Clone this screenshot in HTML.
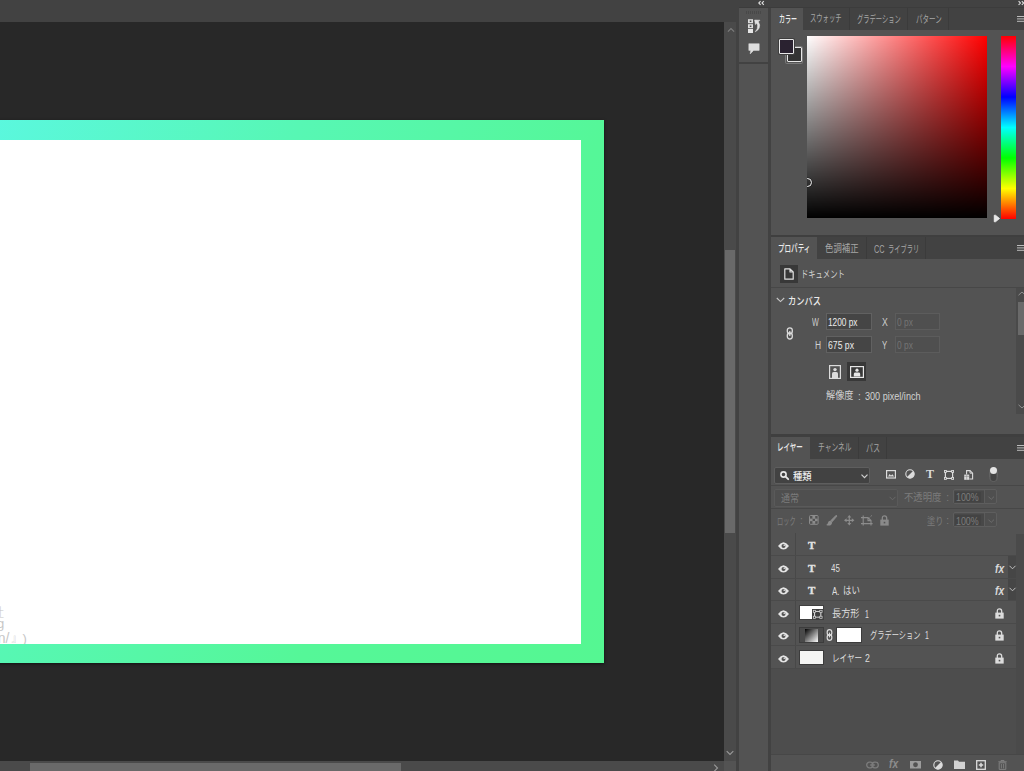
<!DOCTYPE html>
<html lang="ja">
<head>
<meta charset="utf-8">
<title>Photoshop</title>
<style>
*{box-sizing:border-box;margin:0;padding:0}
html,body{width:1024px;height:771px;overflow:hidden;background:#282828}
body{position:relative;font-family:"Liberation Sans","Noto Sans CJK JP",sans-serif;font-size:10px;color:#dcdcdc}
.a{position:absolute}
.t{position:absolute;white-space:nowrap;transform-origin:0 0;line-height:14px;height:14px}
.hi{color:#ececec}
.lo{color:#a6a6a6}
.dis{color:#7c7c7c}
.b{font-weight:500}
.ct{color:#c6c6c6;line-height:15px;height:15px}
svg{position:absolute;overflow:visible}
/*FIT*/
#t-color{left:7.66px;top:4.82px;font-size:10.00px;transform:scaleX(0.599)}
#t-sw{left:39.34px;top:4.10px;font-size:10.00px;transform:scaleX(0.631)}
#t-gr{left:86.00px;top:4.60px;font-size:10.00px;transform:scaleX(0.629)}
#t-pt{left:145.00px;top:4.60px;font-size:10.00px;transform:scaleX(0.651)}
#t-prop{left:7.34px;top:4.60px;font-size:10.00px;transform:scaleX(0.656)}
#t-adj{left:54.00px;top:4.78px;font-size:10.00px;transform:scaleX(0.839)}
#t-cc1{left:103.00px;top:5.48px;font-size:10.00px;transform:scaleX(0.724)}
#t-cc2{left:117.00px;top:5.50px;font-size:10.00px;transform:scaleX(0.624)}
#t-doc{left:30.34px;top:30.95px;font-size:10.00px;transform:scaleX(0.729)}
#t-canvas{left:17.34px;top:57.48px;font-size:10.00px;transform:scaleX(0.823)}
#t-w{left:41.00px;top:78.53px;font-size:10.00px;transform:scaleX(0.715)}
#t-wv{left:57.34px;top:78.12px;font-size:10.00px;transform:scaleX(0.829)}
#t-x{left:110.70px;top:78.53px;font-size:10.00px;transform:scaleX(0.868)}
#t-xv{left:126.00px;top:78.12px;font-size:10.00px;transform:scaleX(0.841)}
#t-h{left:43.70px;top:101.53px;font-size:10.00px;transform:scaleX(0.842)}
#t-hv{left:57.00px;top:101.12px;font-size:10.00px;transform:scaleX(0.866)}
#t-y{left:111.00px;top:101.53px;font-size:10.00px;transform:scaleX(0.774)}
#t-yv{left:126.00px;top:101.12px;font-size:10.00px;transform:scaleX(0.841)}
#t-res1{left:55.00px;top:151.80px;font-size:10.00px;transform:scaleX(0.916)}
#t-res2{left:86.98px;top:153.00px;font-size:10.00px;transform:scaleX(1.000)}
#t-res3{left:94.00px;top:152.64px;font-size:10.00px;transform:scaleX(0.908)}
#t-lay{left:6.34px;top:4.27px;font-size:10.00px;transform:scaleX(0.648)}
#t-ch{left:46.66px;top:4.47px;font-size:10.00px;transform:scaleX(0.674)}
#t-pa{left:95.34px;top:5.48px;font-size:10.00px;transform:scaleX(0.703)}
#t-kind{left:21.66px;top:32.50px;font-size:10.00px;transform:scaleX(0.930)}
#t-norm{left:10.00px;top:55.45px;font-size:10.00px;transform:scaleX(0.900)}
#t-op1{left:133.34px;top:53.50px;font-size:10.00px;transform:scaleX(0.937)}
#t-op2{left:175.26px;top:53.77px;font-size:10.00px;transform:scaleX(1.000)}
#t-opv{left:185.26px;top:54.23px;font-size:10.00px;transform:scaleX(0.887)}
#t-lock1{left:6.00px;top:77.80px;font-size:10.00px;transform:scaleX(0.620)}
#t-lock2{left:29.00px;top:77.45px;font-size:10.00px;transform:scaleX(1.000)}
#t-fill1{left:155.66px;top:77.50px;font-size:10.00px;transform:scaleX(0.817)}
#t-fill2{left:175.26px;top:77.49px;font-size:10.00px;transform:scaleX(1.000)}
#t-fillv{left:185.26px;top:77.77px;font-size:10.00px;transform:scaleX(0.887)}
#t-45{left:60.34px;top:124.82px;font-size:10.00px;transform:scaleX(0.798)}
#t-hai1{left:61.00px;top:147.70px;font-size:10.00px;transform:scaleX(0.799)}
#t-hai2{left:72.00px;top:147.48px;font-size:10.00px;transform:scaleX(0.844)}
#t-rect1{left:61.00px;top:169.73px;font-size:10.00px;transform:scaleX(0.916)}
#t-rect2{left:93.66px;top:170.54px;font-size:10.00px;transform:scaleX(0.690)}
#t-grad1{left:98.66px;top:192.32px;font-size:10.00px;transform:scaleX(0.725)}
#t-grad2{left:153.66px;top:192.46px;font-size:10.00px;transform:scaleX(0.690)}
#t-l21{left:61.00px;top:214.66px;font-size:10.00px;transform:scaleX(0.757)}
#t-l22{left:94.34px;top:214.53px;font-size:10.00px;transform:scaleX(0.875)}
#t-fx1{left:224.46px;top:124.75px;font-size:13.50px;transform:scaleX(0.760)}
#t-fx2{left:224.46px;top:147.45px;font-size:13.50px;transform:scaleX(0.760)}
#t-fx3{left:118.08px;top:320.46px;font-size:13.50px;transform:scaleX(0.763)}
/*ENDFIT*/
</style>
</head>
<body>
<!-- ===== canvas area ===== -->
<div class="a" style="left:0;top:0;width:737px;height:21.5px;background:#424242"></div>
<div class="a" id="doc" style="left:-360px;top:120px;width:964px;height:542.7px;background:linear-gradient(120deg,#5ef8ff 0%,#5df8fd 10%,#57f7b4 52%,#55f798 76%,#55f792 100%);box-shadow:0 1px 3px rgba(0,0,0,.55)"></div>
<div class="a" style="left:-340px;top:140px;width:920.6px;height:504px;background:#fff;overflow:hidden">
  <div class="t ct" style="left:320px;top:466.4px;font-size:12px;font-weight:300">会社</div>
  <div class="t ct" style="left:329.8px;top:475.8px;font-size:13px">ng</div>
  <div class="t ct" style="left:330px;top:491px;font-size:14px">on/</div>
  <div class="t ct" style="left:351.4px;top:491px;font-size:10px;font-weight:300;text-spacing-trim:space-all">』</div>
  <div class="t ct" style="left:362.4px;top:491px;font-size:13px">)</div>
</div>
<!-- vertical scrollbar -->
<div class="a" style="left:724px;top:22px;width:12px;height:739px;background:#4a4a4a"></div>
<div class="a" style="left:725px;top:250px;width:10px;height:283px;background:#696969"></div>
<svg style="left:727px;top:27px" width="8" height="6"><path d="M0.9 4.6 L4 1.5 L7.1 4.6" fill="none" stroke="#7e7e7e" stroke-width="1.1"/></svg>
<svg style="left:726px;top:750px" width="8" height="6"><path d="M0.7 1.2 L4 4.5 L7.3 1.2" fill="none" stroke="#9a9a9a" stroke-width="1.1"/></svg>
<!-- horizontal scrollbar -->
<div class="a" style="left:0;top:761px;width:724px;height:10px;background:#4a4a4a"></div>
<div class="a" style="left:30px;top:763px;width:371px;height:8px;background:#696969"></div>
<div class="a" style="left:724px;top:761px;width:12px;height:10px;background:#535353"></div>
<svg style="left:713px;top:764px" width="6" height="8"><path d="M1.2 0.7 L4.5 4 L1.2 7.3" fill="none" stroke="#9a9a9a" stroke-width="1.1"/></svg>

<!-- ===== right dock ===== -->
<div class="a" style="left:736px;top:0;width:288px;height:771px;background:#424242"></div>
<!-- icon strip -->
<div class="a" style="left:739px;top:8px;width:29.4px;height:54px;background:#535353"></div>
<div class="a" style="left:739px;top:64px;width:29.4px;height:707px;background:#535353"></div>

<!-- dock icons -->
<svg style="left:758px;top:1px" width="7" height="4"><path d="M2.6 0.2 L0.8 2 L2.6 3.8 M5.8 0.2 L4 2 L5.8 3.8" fill="none" stroke="#dedede" stroke-width="1.1"/></svg>
<svg style="left:1018px;top:1px" width="7" height="4"><path d="M0.6 0.2 L2.4 2 L0.6 3.8 M3.8 0.2 L5.6 2 L3.8 3.8" fill="none" stroke="#dedede" stroke-width="1.1"/></svg>
<div class="a" style="left:746px;top:11px;width:16px;height:3px;background:repeating-linear-gradient(to right,#484848 0,#484848 1px,#535353 1px,#535353 2px)"></div>
<svg style="left:748px;top:19px" width="13" height="14"><rect x="0" y="0.2" width="5" height="4" fill="#dedede"/><rect x="1.7" y="1.5" width="1.7" height="1.5" fill="#4a4a4a"/><rect x="0" y="5.2" width="5" height="4" fill="#dedede"/><rect x="1.7" y="6.5" width="1.7" height="1.5" fill="#4a4a4a"/><rect x="0" y="10" width="5" height="4" fill="#e6e6e6"/><path d="M6.6 1 L12 1.2 L10.4 2.8 Q12.6 6 11.2 9 Q10 11.6 7.2 12.8 Q10 9.8 9.6 6.8 Q9.4 5.2 8.6 4.2 L7.4 5.6 Z" fill="#e0e0e0" stroke="#e0e0e0" stroke-width=".5" stroke-linejoin="round"/></svg>
<svg style="left:748px;top:43px" width="12" height="11"><path d="M0.8 0.7 H11.2 V7.4 H5.6 L2.2 10.9 L2.7 7.4 H0.8 Z" fill="#dedede" stroke="#dedede" stroke-width=".5" stroke-linejoin="round"/></svg>
<div class="a" style="left:739px;top:7px;width:285px;height:1px;background:#3c3c3c"></div>
<div class="a" style="left:771px;top:235px;width:253px;height:2.4px;background:#3f3f3f"></div>
<div class="a" style="left:771px;top:434px;width:253px;height:3px;background:#3f3f3f"></div>
<!-- PANELS -->
<div id="p-color" class="a" style="left:771px;top:8px;width:253px;height:227px;background:#535353">
  <!-- tab bar -->
  <div class="a" style="left:32px;top:0;width:221px;height:22px;background:#424242"></div>
  <div class="a" style="left:78px;top:0;width:1px;height:22px;background:#3b3b3b"></div>
  <div class="a" style="left:136px;top:0;width:1px;height:22px;background:#3b3b3b"></div>
  <div class="a" style="left:177px;top:0;width:1px;height:22px;background:#3b3b3b"></div>
  <div class="t hi b" id="t-color">カラー</div>
  <div class="t lo" id="t-sw">スウォッチ</div>
  <div class="t lo" id="t-gr">グラデーション</div>
  <div class="t lo" id="t-pt">パターン</div>
  <!-- menu -->
  <div class="a" style="left:245.8px;top:7.7px;width:7.2px;height:1.2px;background:#bcbcbc;box-shadow:0 2.4px 0 #bcbcbc,0 4.8px 0 #bcbcbc"></div>
  <!-- swatches -->
  <div class="a" style="left:14.3px;top:37.8px;width:17.5px;height:18px;border:1px solid #7a7a7a;border-radius:1.5px;background:#535353"></div>
  <div class="a" style="left:16px;top:39.3px;width:14.7px;height:14.7px;border:1.2px solid #e6e6e6;border-radius:1px;background:#333"></div>
  <div class="a" style="left:7.2px;top:30.2px;width:16.4px;height:16.6px;border:1px solid #3e3e3e;border-radius:1.5px;background:#535353"></div>
  <div class="a" style="left:8px;top:31px;width:14.8px;height:15px;border:1.2px solid #e8e8e8;border-radius:1px;background:#2a2230"></div>
  <!-- colour field -->
  <div class="a" style="left:35.7px;top:28px;width:180.3px;height:182px;background:linear-gradient(to bottom,rgba(0,0,0,0),#000),linear-gradient(to right,#fff,#f00);overflow:hidden">
    <div class="a" style="left:-4.4px;top:141.8px;width:9.4px;height:9.4px;border:1.2px solid #f2f2f2;border-radius:50%;box-shadow:0 0 0 .6px rgba(0,0,0,.45)"></div>
  </div>
  <!-- hue bar -->
  <div class="a" style="left:230px;top:28px;width:15px;height:182.6px;background:linear-gradient(to bottom,#f00 0%,#f0f 16.67%,#00f 33.33%,#0ff 50%,#0f0 66.67%,#ff0 83.33%,#f00 100%)"></div>
  <svg style="left:221.6px;top:205.6px" width="8" height="9"><path d="M1.2 1.2 L2.6 1.2 L6.6 4.5 L2.6 7.8 L1.2 7.8 Z" fill="#e8e8e8" stroke="#fff" stroke-width=".6" stroke-linejoin="round"/></svg>
</div>
<div id="p-prop" class="a" style="left:771px;top:237.4px;width:253px;height:196.6px;background:#535353">
  <div class="a" style="left:46px;top:0;width:207px;height:22px;background:#424242"></div>
  <div class="a" style="left:95px;top:0;width:1px;height:22px;background:#3b3b3b"></div>
  <div class="a" style="left:154px;top:0;width:1px;height:22px;background:#3b3b3b"></div>
  <div class="t hi b" id="t-prop">プロパティ</div>
  <div class="t lo" id="t-adj">色調補正</div>
  <div class="t lo" id="t-cc1">CC</div> <div class="t lo" id="t-cc2">ライブラリ</div>
  <div class="a" style="left:245.8px;top:7.7px;width:7.2px;height:1.2px;background:#bcbcbc;box-shadow:0 2.4px 0 #bcbcbc,0 4.8px 0 #bcbcbc"></div>
  <!-- document row -->
  <div class="a" style="left:9px;top:28px;width:18px;height:18px;background:#383838"></div>
  <svg style="left:13px;top:31px" width="10" height="12"><path d="M0.8 0.8 H6 L9.2 4 V11.2 H0.8 Z M6 0.8 V4 H9.2" fill="none" stroke="#e0e0e0" stroke-width="1.2" stroke-linejoin="round"/></svg>
  <div class="t" id="t-doc" style="color:#d2d2d2">ドキュメント</div>
  <div class="a" style="left:0;top:49.4px;width:253px;height:1px;background:#474747"></div>
  <!-- scrollbar -->
  <div class="a" style="left:245px;top:51px;width:8px;height:126px;background:#4a4a4a"></div>
  <div class="a" style="left:247px;top:65px;width:6px;height:33px;background:#6a6a6a"></div>
  <svg style="left:247px;top:54px" width="8" height="5"><path d="M0.5 4.2 L4 1 L7.5 4.2" fill="none" stroke="#909090" stroke-width="1"/></svg>
  <svg style="left:247px;top:167px" width="8" height="5"><path d="M0.5 0.8 L4 4 L7.5 0.8" fill="none" stroke="#909090" stroke-width="1"/></svg>
  <!-- canvas section -->
  <svg style="left:5px;top:60px" width="9" height="6"><path d="M0.8 1 L4.5 4.6 L8.2 1" fill="none" stroke="#c8c8c8" stroke-width="1.1"/></svg>
  <div class="t hi b" id="t-canvas">カンバス</div>
  <!-- chain -->
  <svg style="left:15px;top:90px" width="8" height="13"><rect x="1.3" y="0.8" width="5" height="6" rx="2.5" fill="none" stroke="#dcdcdc" stroke-width="1.3"/><rect x="1.3" y="6" width="5" height="6" rx="2.5" fill="none" stroke="#dcdcdc" stroke-width="1.3"/><path d="M3.8 4 V9" stroke="#dcdcdc" stroke-width="1.2"/></svg>
  <div class="t" id="t-w" style="color:#cfcfcf">W</div>
  <div class="a" style="left:55px;top:76px;width:46px;height:17px;background:#454545;border:1px solid #616161"></div>
  <div class="t" id="t-wv" style="color:#ececec">1200 px</div>
  <div class="t" id="t-x" style="color:#cfcfcf">X</div>
  <div class="a" style="left:124px;top:76px;width:45px;height:17px;background:#4f4f4f;border:1px solid #5c5c5c"></div>
  <div class="t" id="t-xv" style="color:#747474">0 px</div>
  <div class="t" id="t-h" style="color:#cfcfcf">H</div>
  <div class="a" style="left:55px;top:99px;width:46px;height:17px;background:#454545;border:1px solid #616161"></div>
  <div class="t" id="t-hv" style="color:#ececec">675 px</div>
  <div class="t" id="t-y" style="color:#cfcfcf">Y</div>
  <div class="a" style="left:124px;top:99px;width:45px;height:17px;background:#4f4f4f;border:1px solid #5c5c5c"></div>
  <div class="t" id="t-yv" style="color:#747474">0 px</div>
  <!-- orientation -->
  <svg style="left:58px;top:128px" width="12" height="14"><rect x="0.6" y="0.6" width="10.8" height="12.8" fill="#535353" stroke="#dcdcdc" stroke-width="1.2"/><circle cx="6" cy="4.6" r="1.7" fill="#dcdcdc"/><path d="M3 13 V8.6 Q3 7 4.6 7 H7.4 Q9 7 9 8.6 V13 Z" fill="#dcdcdc"/></svg>
  <div class="a" style="left:76px;top:125px;width:19px;height:19px;background:#383838"></div>
  <svg style="left:79px;top:129px" width="14" height="12"><rect x="0.6" y="0.6" width="12.8" height="10.8" fill="#383838" stroke="#e6e6e6" stroke-width="1.2"/><circle cx="7" cy="4.2" r="1.6" fill="#e6e6e6"/><path d="M3.8 10.6 V8 Q3.8 6.6 5.4 6.6 H8.6 Q10.2 6.6 10.2 8 V10.6 Z" fill="#e6e6e6"/></svg>
  <div class="t" id="t-res1" style="color:#d2d2d2">解像度</div> <div class="t" id="t-res2" style="color:#d2d2d2">:</div> <div class="t" id="t-res3" style="color:#d2d2d2">300 pixel/inch</div>
</div>
<div id="p-layers" class="a" style="left:771px;top:437px;width:253px;height:334px;background:#535353">
  <div class="a" style="left:39px;top:0;width:214px;height:22px;background:#424242"></div>
  <div class="a" style="left:87px;top:0;width:1px;height:22px;background:#3b3b3b"></div>
  <div class="a" style="left:115px;top:0;width:1px;height:22px;background:#3b3b3b"></div>
  <div class="t hi b" id="t-lay">レイヤー</div>
  <div class="t lo" id="t-ch">チャンネル</div>
  <div class="t lo" id="t-pa">パス</div>
  <div class="a" style="left:245.8px;top:7.7px;width:7.2px;height:1.2px;background:#bcbcbc;box-shadow:0 2.4px 0 #bcbcbc,0 4.8px 0 #bcbcbc"></div>
  <!-- filter row -->
  <div class="a" style="left:3px;top:29.6px;width:95.6px;height:17.6px;background:#424242;border:1px solid #5e5e5e;border-radius:2px"></div>
  <svg style="left:9px;top:34px" width="9" height="9"><circle cx="3.5" cy="3.5" r="2.6" fill="none" stroke="#e8e8e8" stroke-width="1.6"/><path d="M5.4 5.4 L8.2 8.2" stroke="#e8e8e8" stroke-width="1.9" stroke-linecap="round"/></svg>
  <div class="t hi b" id="t-kind">種類</div>
  <svg style="left:89.6px;top:36.6px" width="7" height="5"><path d="M0.5 0.6 L3.5 3.6 L6.5 0.6" fill="none" stroke="#d0d0d0" stroke-width="1.2"/></svg>
  <!-- filter icons -->
  <svg style="left:115px;top:32.8px" width="10" height="9"><rect x="0.6" y="0.6" width="8.8" height="7.4" fill="none" stroke="#dcdcdc" stroke-width="1.2"/><path d="M2 6.4 L3.6 4 L5 5.4 L6.4 4.2 L8.2 6.4 Z" fill="#dcdcdc"/></svg>
  <svg style="left:134.4px;top:32.4px" width="10" height="10"><circle cx="5" cy="5" r="4.2" fill="none" stroke="#dcdcdc" stroke-width="1.1"/><path d="M8 2 A4.2 4.2 0 0 1 2 8 Z" fill="#dcdcdc"/></svg>
  <div class="t" style="left:155px;top:31px;font-family:'Liberation Serif',serif;font-weight:bold;font-size:12px;color:#dcdcdc;line-height:12px;height:12px">T</div>
  <svg style="left:173px;top:32.5px" width="10" height="10"><rect x="1.4" y="1.4" width="7.2" height="7" fill="none" stroke="#dcdcdc" stroke-width="1.2"/><rect x="0" y="0" width="2.8" height="2.8" fill="#dcdcdc"/><rect x="7.2" y="0" width="2.8" height="2.8" fill="#dcdcdc"/><rect x="0" y="7" width="2.8" height="2.8" fill="#dcdcdc"/><rect x="7.2" y="7" width="2.8" height="2.8" fill="#dcdcdc"/><rect x="0.9" y="0.9" width="1" height="1" fill="#535353"/><rect x="8.1" y="0.9" width="1" height="1" fill="#535353"/><rect x="0.9" y="7.9" width="1" height="1" fill="#535353"/><rect x="8.1" y="7.9" width="1" height="1" fill="#535353"/></svg>
  <svg style="left:193px;top:32.6px" width="10" height="10"><path d="M2.6 4.6 V0.6 H6 L8.6 3.2 V9 H5.4" fill="none" stroke="#dcdcdc" stroke-width="1.1"/><path d="M6 0.6 V3.2 H8.6" fill="none" stroke="#dcdcdc" stroke-width=".9"/><rect x="0.2" y="4.6" width="5" height="5.2" fill="#dcdcdc"/><path d="M0.2 6.4 H5.2 M2.7 4.6 V9.8" stroke="#8a8a8a" stroke-width=".6"/></svg>
  <div class="a" style="left:218.1px;top:29.7px;width:8.9px;height:15.3px;border-radius:4.5px;background:#535353;border:1px solid #626262"></div><div class="a" style="left:219.9px;top:32px;width:5.2px;height:11.5px;border-radius:2.6px;background:#444"></div>
  <div class="a" style="left:219px;top:29.9px;width:7.1px;height:7.1px;border-radius:50%;background:#e4e4e4"></div>
  <div class="a" style="left:0;top:48px;width:253px;height:1px;background:#474747"></div>
  <!-- blend row -->
  <div class="a" style="left:3px;top:52px;width:124px;height:18px;background:#4f4f4f;border:1px solid #5a5a5a;border-radius:2px"></div>
  <div class="t dis" id="t-norm">通常</div>
  <svg style="left:118px;top:59px" width="7" height="5"><path d="M0.5 0.8 L3.5 3.8 L6.5 0.8" fill="none" stroke="#6a6a6a" stroke-width="1"/></svg>
  <div class="t dis" id="t-op1">不透明度</div> <div class="t dis" id="t-op2">:</div>
  <div class="a" style="left:181.5px;top:52.4px;width:44.2px;height:15px;background:#4f4f4f;border:1px solid #5e5e5e;border-radius:2px"></div><div class="a" style="left:183.2px;top:53.6px;width:29.6px;height:12.4px;background:#484848"></div><div class="a" style="left:184.2px;top:54.8px;width:26px;height:10.2px;background:#434343"></div><div class="a" style="left:213.4px;top:53px;width:1px;height:13.8px;background:#5c5c5c"></div>
  <div class="t dis" id="t-opv">100%</div>
  <svg style="left:216.6px;top:59.4px" width="7" height="5"><path d="M0.4 0.6 L3.2 3.4 L6 0.6" fill="none" stroke="#6c6c6c" stroke-width="1"/></svg>
  <div class="a" style="left:0;top:71px;width:253px;height:1px;background:#474747"></div>
  <!-- lock row -->
  <div class="t dis" id="t-lock1">ロック</div> <div class="t dis" id="t-lock2">:</div>
  <svg style="left:37.6px;top:78.3px" width="10" height="10"><rect x="0.5" y="0.5" width="8.6" height="8.8" rx="1" fill="none" stroke="#8c8c8c"/><rect x="3.4" y="1" width="2.8" height="2.8" fill="#8c8c8c"/><rect x="1" y="3.6" width="2.6" height="2.6" fill="#8c8c8c"/><rect x="6" y="3.6" width="2.6" height="2.6" fill="#8c8c8c"/><rect x="3.4" y="6" width="2.8" height="2.8" fill="#8c8c8c"/></svg>
  <svg style="left:54.6px;top:78.2px" width="12" height="11"><path d="M10.2 0.2 L11 1 L6.2 6.8 L4.8 5.6 Z" fill="#8c8c8c" stroke="#8c8c8c" stroke-width=".8" stroke-linejoin="round"/><path d="M4.4 5.8 Q2.4 5.6 2 7.8 Q1.8 9.4 0.2 10 Q3.4 11.4 5.4 9.4 Q6.6 8 5.8 6.8 Z" fill="#8c8c8c"/></svg>
  <svg style="left:72.6px;top:77.8px" width="11" height="11"><path d="M5.3 0 L7.3 2.6 H5.9 V4.7 H7.8 V3.3 L10.4 5.3 L7.8 7.3 V5.9 H5.9 V8 H7.3 L5.3 10.6 L3.3 8 H4.7 V5.9 H2.6 V7.3 L0 5.3 L2.6 3.3 V4.7 H4.7 V2.6 H3.3 Z" fill="#8c8c8c"/></svg>
  <svg style="left:89.8px;top:78px" width="12" height="11"><path d="M2.2 0.6 V10.6 M0 2.6 H7 L10 5.6 V10.6 M0 8.6 H11.6 M7 2.6 V5.6 H10" fill="none" stroke="#8c8c8c" stroke-width="1.1"/><path d="M8.6 2.4 L11.4 0" stroke="#8c8c8c" stroke-width=".9" stroke-dasharray="1.1 .9"/></svg>
  <svg style="left:109px;top:78px" width="9" height="11"><path d="M2.3 5 V3.2 Q2.3 0.8 4.5 0.8 Q6.7 0.8 6.7 3.2 V5" fill="none" stroke="#8a8a8a" stroke-width="1.3"/><rect x="0.3" y="4.6" width="8.4" height="6" fill="#8a8a8a"/><rect x="3.7" y="6.8" width="1.6" height="1.6" fill="#535353"/></svg>
  <div class="t dis" id="t-fill1">塗り</div> <div class="t dis" id="t-fill2">:</div>
  <div class="a" style="left:181.5px;top:75.4px;width:44.2px;height:15px;background:#4f4f4f;border:1px solid #5e5e5e;border-radius:2px"></div><div class="a" style="left:183.2px;top:76.6px;width:29.6px;height:12.4px;background:#484848"></div><div class="a" style="left:184.2px;top:77.8px;width:26px;height:10.2px;background:#434343"></div><div class="a" style="left:213.4px;top:76px;width:1px;height:13.8px;background:#5c5c5c"></div>
  <div class="t dis" id="t-fillv">100%</div>
  <svg style="left:216.6px;top:82.4px" width="7" height="5"><path d="M0.4 0.6 L3.2 3.4 L6 0.6" fill="none" stroke="#6c6c6c" stroke-width="1"/></svg>
  <!-- layer list -->
  <div class="a" style="left:0;top:232px;width:245px;height:86px;background:#4d4d4d"></div>
  <div class="a" style="left:245px;top:97px;width:8px;height:221px;background:#4a4a4a"></div>
  <div class="a" style="left:237px;top:119px;width:8px;height:45px;background:#464646"></div>
  <div class="a" style="left:23.8px;top:96px;width:1px;height:136px;background:#484848"></div>
  <div class="a" style="left:0;top:118px;width:245px;height:1px;background:#4a4a4a"></div>
  <div class="a" style="left:0;top:141px;width:245px;height:1px;background:#4a4a4a"></div>
  <div class="a" style="left:0;top:163px;width:245px;height:1px;background:#4a4a4a"></div>
  <div class="a" style="left:0;top:186px;width:245px;height:1px;background:#4a4a4a"></div>
  <div class="a" style="left:0;top:208px;width:245px;height:1px;background:#4a4a4a"></div>
  <div class="a" style="left:0;top:231px;width:245px;height:1px;background:#4a4a4a"></div>
  
  <svg style="left:6.9px;top:105.0px" width="11" height="8"><path d="M0 3.9 Q5.5 -3.5 11 3.9 Q5.5 11.3 0 3.9 Z" fill="#e4e4e4"/><circle cx="5.5" cy="3.9" r="2" fill="#535353"/><circle cx="6.3" cy="3.2" r=".85" fill="#d0d0d0"/></svg>
  <svg style="left:6.9px;top:127.5px" width="11" height="8"><path d="M0 3.9 Q5.5 -3.5 11 3.9 Q5.5 11.3 0 3.9 Z" fill="#e4e4e4"/><circle cx="5.5" cy="3.9" r="2" fill="#535353"/><circle cx="6.3" cy="3.2" r=".85" fill="#d0d0d0"/></svg>
  <svg style="left:6.9px;top:150.0px" width="11" height="8"><path d="M0 3.9 Q5.5 -3.5 11 3.9 Q5.5 11.3 0 3.9 Z" fill="#e4e4e4"/><circle cx="5.5" cy="3.9" r="2" fill="#535353"/><circle cx="6.3" cy="3.2" r=".85" fill="#d0d0d0"/></svg>
  <svg style="left:6.9px;top:172.5px" width="11" height="8"><path d="M0 3.9 Q5.5 -3.5 11 3.9 Q5.5 11.3 0 3.9 Z" fill="#e4e4e4"/><circle cx="5.5" cy="3.9" r="2" fill="#535353"/><circle cx="6.3" cy="3.2" r=".85" fill="#d0d0d0"/></svg>
  <svg style="left:6.9px;top:195.0px" width="11" height="8"><path d="M0 3.9 Q5.5 -3.5 11 3.9 Q5.5 11.3 0 3.9 Z" fill="#e4e4e4"/><circle cx="5.5" cy="3.9" r="2" fill="#535353"/><circle cx="6.3" cy="3.2" r=".85" fill="#d0d0d0"/></svg>
  <svg style="left:6.9px;top:217.5px" width="11" height="8"><path d="M0 3.9 Q5.5 -3.5 11 3.9 Q5.5 11.3 0 3.9 Z" fill="#e4e4e4"/><circle cx="5.5" cy="3.9" r="2" fill="#535353"/><circle cx="6.3" cy="3.2" r=".85" fill="#d0d0d0"/></svg>
  <div class="t" style="left:37px;top:102.4px;-webkit-text-stroke:.35px #e2e2e2;font-family:'Liberation Serif',serif;font-weight:bold;font-size:11px;color:#e2e2e2;line-height:12px;height:12px">T</div>
  <div class="t" style="left:37px;top:124.9px;-webkit-text-stroke:.35px #e2e2e2;font-family:'Liberation Serif',serif;font-weight:bold;font-size:11px;color:#e2e2e2;line-height:12px;height:12px">T</div>
  <div class="t" style="left:37px;top:147.4px;-webkit-text-stroke:.35px #e2e2e2;font-family:'Liberation Serif',serif;font-weight:bold;font-size:11px;color:#e2e2e2;line-height:12px;height:12px">T</div>
  <div class="t" id="t-45" style="color:#dedede">45</div>
  <div class="t" id="t-hai1" style="color:#dedede">A.</div> <div class="t" id="t-hai2" style="color:#dedede">はい</div>
  <div class="t" id="t-fx1" style="font-style:italic;font-weight:bold;color:#d8d8d8">fx</div>
  <svg style="left:238px;top:128px" width="7" height="5"><path d="M0.5 0.8 L3.5 3.8 L6.5 0.8" fill="none" stroke="#c0c0c0" stroke-width="1"/></svg>
  <div class="t" id="t-fx2" style="font-style:italic;font-weight:bold;color:#d8d8d8">fx</div>
  <svg style="left:238px;top:150px" width="7" height="5"><path d="M0.5 0.8 L3.5 3.8 L6.5 0.8" fill="none" stroke="#c0c0c0" stroke-width="1"/></svg>
  <div class="a" style="left:27.6px;top:168.4px;width:25px;height:15px;background:#fff;border:1px solid #404040"></div>
  <div class="a" style="left:40.5px;top:171.6px;width:12.1px;height:11.8px;background:#404040"></div>
  <svg style="left:42.3px;top:173.2px" width="9.4" height="8.6" viewBox="0 0 9 9" preserveAspectRatio="none"><rect x="1.5" y="1.5" width="6" height="6" fill="none" stroke="#dcdcdc" stroke-width="1"/><rect x="0.3" y="0.3" width="2.2" height="2.2" fill="#3c3c3c" stroke="#dcdcdc" stroke-width=".7"/><rect x="6.5" y="0.3" width="2.2" height="2.2" fill="#3c3c3c" stroke="#dcdcdc" stroke-width=".7"/><rect x="0.3" y="6.5" width="2.2" height="2.2" fill="#3c3c3c" stroke="#dcdcdc" stroke-width=".7"/><rect x="6.5" y="6.5" width="2.2" height="2.2" fill="#3c3c3c" stroke="#dcdcdc" stroke-width=".7"/></svg>
  <div class="t" id="t-rect1" style="color:#dedede">長方形</div> <div class="t" id="t-rect2" style="color:#dedede">1</div>
  <svg style="left:224px;top:171px" width="9" height="11"><path d="M2.3 5 V3.2 Q2.3 0.8 4.5 0.8 Q6.7 0.8 6.7 3.2 V5" fill="none" stroke="#dcdcdc" stroke-width="1.3"/><rect x="0.3" y="4.6" width="8.4" height="6" fill="#dcdcdc"/><rect x="3.7" y="6.8" width="1.6" height="1.6" fill="#535353"/></svg>
  <div class="a" style="left:27.6px;top:190.2px;width:25px;height:15.4px;background:#4a4a4a;border:1px solid #3c3c3c"></div>
  <div class="a" style="left:33.9px;top:191.5px;width:12.9px;height:13.3px;background:linear-gradient(135deg,#000,#fff)"></div>
  <svg style="left:55.4px;top:191.8px" width="7" height="12"><rect x="1.2" y="0.7" width="4.6" height="5.6" rx="2.3" fill="none" stroke="#dcdcdc" stroke-width="1.2"/><rect x="1.2" y="5.7" width="4.6" height="5.6" rx="2.3" fill="none" stroke="#dcdcdc" stroke-width="1.2"/><path d="M3.5 3.6 V8.4" stroke="#dcdcdc" stroke-width="1.1"/></svg>
  <div class="a" style="left:65px;top:190.2px;width:26px;height:15.6px;background:#fff;border:1px solid #3c3c3c"></div>
  <div class="t" id="t-grad1" style="color:#dedede">グラデーション</div> <div class="t" id="t-grad2" style="color:#dedede">1</div>
  <svg style="left:224px;top:193px" width="9" height="11"><path d="M2.3 5 V3.2 Q2.3 0.8 4.5 0.8 Q6.7 0.8 6.7 3.2 V5" fill="none" stroke="#dcdcdc" stroke-width="1.3"/><rect x="0.3" y="4.6" width="8.4" height="6" fill="#dcdcdc"/><rect x="3.7" y="6.8" width="1.6" height="1.6" fill="#535353"/></svg>
  <div class="a" style="left:27.6px;top:213.2px;width:25px;height:15.2px;background:#f5f5f3;border:1px solid #3c3c3c"></div>
  <div class="t" id="t-l21" style="color:#dedede">レイヤー</div> <div class="t" id="t-l22" style="color:#dedede">2</div>
  <svg style="left:224px;top:216px" width="9" height="11"><path d="M2.3 5 V3.2 Q2.3 0.8 4.5 0.8 Q6.7 0.8 6.7 3.2 V5" fill="none" stroke="#dcdcdc" stroke-width="1.3"/><rect x="0.3" y="4.6" width="8.4" height="6" fill="#dcdcdc"/><rect x="3.7" y="6.8" width="1.6" height="1.6" fill="#535353"/></svg>
  
  <!-- bottom bar -->
  <div class="a" style="left:0;top:317px;width:253px;height:1px;background:#474747"></div>
  <div class="a" style="left:0;top:318px;width:253px;height:16px;background:#535353"></div>
  <svg style="left:95px;top:323.5px" width="13" height="8"><rect x="0.7" y="1.2" width="6.4" height="5.6" rx="2.8" fill="none" stroke="#7c7c7c" stroke-width="1.3"/><rect x="5.9" y="1.2" width="6.4" height="5.6" rx="2.8" fill="none" stroke="#7c7c7c" stroke-width="1.3"/><path d="M4 4 H9" stroke="#7c7c7c" stroke-width="1.2"/></svg>
  <div class="t" id="t-fx3" style="font-style:italic;font-weight:bold;color:#8c8c8c">fx</div>
  <svg style="left:139px;top:323.5px" width="11" height="8"><rect x="0" y="0" width="11" height="7.5" fill="#9c9c9c"/><circle cx="5.5" cy="3.75" r="2.4" fill="#535353"/></svg>
  <svg style="left:162.2px;top:322.6px" width="10" height="10"><circle cx="5" cy="5" r="4.2" fill="none" stroke="#dcdcdc" stroke-width="1.1"/><path d="M8 2 A4.2 4.2 0 0 1 2 8 Z" fill="#dcdcdc"/></svg>
  <svg style="left:183px;top:322.6px" width="11" height="9"><path d="M0 0.5 H4 L5 1.8 H11 V9 H0 Z" fill="#d2d2d2"/></svg>
  <svg style="left:205px;top:322.6px" width="10" height="10"><rect x="0.7" y="0.7" width="8.6" height="8.6" fill="none" stroke="#dcdcdc" stroke-width="1.3"/><path d="M5 2.8 V7.2 M2.8 5 H7.2" stroke="#dcdcdc" stroke-width="1.5"/></svg>
  <svg style="left:227px;top:323px" width="9" height="10"><path d="M0.3 1.8 H8.7 M3 1.8 V0.5 H6 V1.8" fill="none" stroke="#808080" stroke-width="1"/><path d="M1.2 2.8 H7.8 V9.4 H1.2 Z" fill="none" stroke="#808080" stroke-width="1"/><path d="M3.4 4 V8.4 M5.6 4 V8.4" stroke="#808080" stroke-width=".9"/></svg>
  
</div>
</body>
</html>
